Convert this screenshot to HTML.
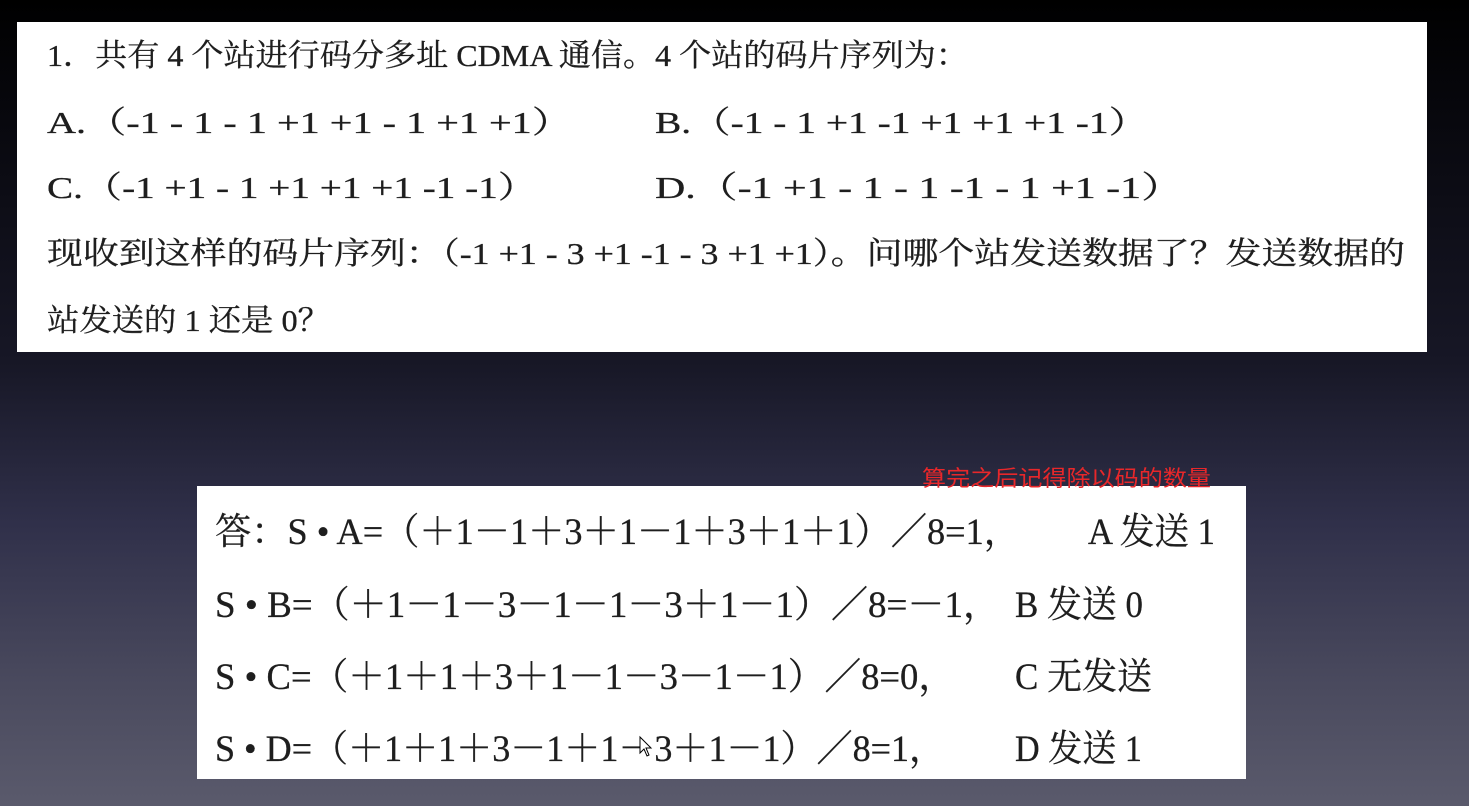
<!DOCTYPE html>
<html><head><meta charset="utf-8"><style>
html,body{margin:0;padding:0;width:1469px;height:806px;overflow:hidden}
body{background:linear-gradient(180deg,#000 0%,#08080e 15%,#171726 45%,#30304a 65%,#4a4a5e 85%,#5a5a6c 100%)}
svg{position:absolute;left:0;top:0}
.t{font-family:"Liberation Serif","Noto Serif CJK SC",serif;fill:#1e1e1e;stroke:#1e1e1e;stroke-width:0.3}
</style></head><body>
<svg width="1469" height="806" xmlns="http://www.w3.org/2000/svg">
<rect x="17" y="22" width="1410" height="330" fill="#fff"/>
<rect x="197" y="486" width="1049" height="293" fill="#fff"/>
<g class="t" font-size="31">
<text x="47" y="66" textLength="921" lengthAdjust="spacingAndGlyphs">1．共有 4 个站进行码分多址 CDMA 通信。4 个站的码片序列为：</text>
<text x="47" y="133" textLength="525" lengthAdjust="spacingAndGlyphs">A.（-1  - 1  - 1 +1 +1  - 1 +1 +1）</text>
<text x="655" y="133" textLength="493" lengthAdjust="spacingAndGlyphs">B.（-1  - 1 +1 -1 +1 +1 +1 -1）</text>
<text x="47" y="198" textLength="490" lengthAdjust="spacingAndGlyphs">C.（-1 +1  - 1 +1 +1 +1 -1 -1）</text>
<text x="655" y="198" textLength="528" lengthAdjust="spacingAndGlyphs">D.（-1 +1  - 1  - 1 -1  - 1 +1 -1）</text>
<text x="47" y="264" textLength="1358" lengthAdjust="spacingAndGlyphs">现收到这样的码片序列：（-1 +1  - 3 +1 -1  - 3 +1 +1）。问哪个站发送数据了？发送数据的</text>
<text x="47" y="331" textLength="283" lengthAdjust="spacingAndGlyphs">站发送的 1 还是 0？</text>
</g>
<g class="t" font-size="37">
<text x="215" y="544" textLength="805" lengthAdjust="spacingAndGlyphs">答：S • A=（＋1－1＋3＋1－1＋3＋1＋1）／8=1，</text>
<text x="1088" y="544" textLength="127" lengthAdjust="spacingAndGlyphs">A 发送 1</text>
<text x="215" y="617" textLength="785" lengthAdjust="spacingAndGlyphs">S • B=（＋1－1－3－1－1－3＋1－1）／8=－1，</text>
<text x="1015" y="617" textLength="128" lengthAdjust="spacingAndGlyphs">B 发送 0</text>
<text x="215" y="689" textLength="740" lengthAdjust="spacingAndGlyphs">S • C=（＋1＋1＋3＋1－1－3－1－1）／8=0，</text>
<text x="1015" y="689" textLength="137" lengthAdjust="spacingAndGlyphs">C 无发送</text>
<text x="215" y="761" textLength="730" lengthAdjust="spacingAndGlyphs">S • D=（＋1＋1＋3－1＋1－3＋1－1）／8=1，</text>
<text x="1015" y="761" textLength="127" lengthAdjust="spacingAndGlyphs">D 发送 1</text>
</g>
<text x="922" y="486" font-size="22" fill="#e8272a" font-family="'Liberation Sans','Noto Sans CJK SC',sans-serif" textLength="289" lengthAdjust="spacingAndGlyphs">算完之后记得除以码的数量</text>
<path d="M640 737 L640 753 L644 749 L647 756 L649 755 L646 748 L651 748 Z" fill="#fff" stroke="#000" stroke-width="1"/>
</svg>
</body></html>
